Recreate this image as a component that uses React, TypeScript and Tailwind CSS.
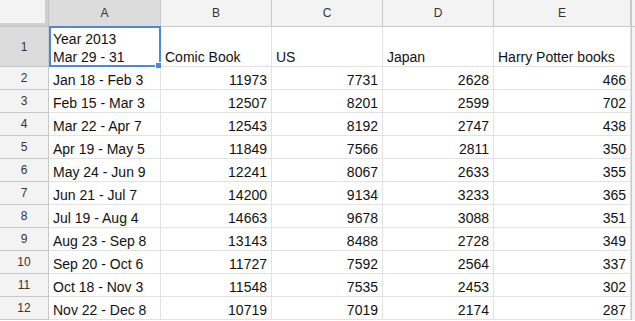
import React from "react";

const rows: [string, number, number, number, number][] = [
  ["Jan 18 - Feb 3", 11973, 7731, 2628, 466],
  ["Feb 15 - Mar 3", 12507, 8201, 2599, 702],
  ["Mar 22 - Apr 7", 12543, 8192, 2747, 438],
  ["Apr 19 - May 5", 11849, 7566, 2811, 350],
  ["May 24 - Jun 9", 12241, 8067, 2633, 355],
  ["Jun 21 - Jul 7", 14200, 9134, 3233, 365],
  ["Jul 19 - Aug 4", 14663, 9678, 3088, 351],
  ["Aug 23 - Sep 8", 13143, 8488, 2728, 349],
  ["Sep 20 - Oct 6", 11727, 7592, 2564, 337],
  ["Oct 18 - Nov 3", 11548, 7535, 2453, 302],
  ["Nov 22 - Dec 8", 10719, 7019, 2174, 287],
];

const cols = ["A", "B", "C", "D", "E"];

export default function App() {
  return (
    <div
      className="relative w-[635px] h-[321px] bg-white overflow-hidden text-[#111]"
      style={{ fontFamily: '"Liberation Sans", Arial, sans-serif' }}
    >
      <div className="grid grid-cols-[49px_112px_111px_111px_111px_137px_1fr] grid-rows-[27px_40px_repeat(11,23px)]">
        {/* corner */}
        <div className="border-r border-b border-[#c0c0c0] bg-[#f8f8f8]">
          <div className="h-full w-full bg-[#f3f3f3] border-r-[3px] border-b-[3px] border-[#cfcfcf]" />
        </div>
        {cols.map((c) => (
          <div
            key={c}
            className={`flex items-center justify-center border-r border-b border-[#c8c8c8] text-[12px] text-[#333] ${
              c === "A" ? "bg-[#dcdcdc]" : "bg-[#f3f3f3]"
            }`}
          >
            {c}
          </div>
        ))}
        <div className="bg-[#f3f3f3] border-b border-l border-[#c8c8c8]" />

        {/* row 1 */}
        <div className="flex items-center justify-center border-r border-b border-[#c8c8c8] bg-[#dcdcdc] text-[12px] text-[#333]">
          1
        </div>
        <div className="flex flex-col justify-end border-r border-b border-[#e2e2e2] px-[4px] text-[14px] leading-[18px]">
          <span>Year 2013</span>
          <span>Mar 29 - 31</span>
        </div>
        {["Comic Book", "US", "Japan", "Harry Potter books"].map((t) => (
          <div
            key={t}
            className="flex items-end border-r border-b border-[#e2e2e2] px-[4px] text-[14px] leading-[18px] whitespace-nowrap"
          >
            {t}
          </div>
        ))}
        <div className="bg-[#f3f3f3] border-l border-[#c8c8c8]" />

        {rows.map((r, i) => (
          <React.Fragment key={i}>
            <div className="flex items-center justify-center border-r border-b border-[#c8c8c8] bg-[#f3f3f3] text-[12px] text-[#333]">
              {i + 2}
            </div>
            <div className="flex items-end border-r border-b border-[#e2e2e2] px-[4px] text-[14px] leading-[18px] whitespace-nowrap">
              {r[0]}
            </div>
            {[r[1], r[2], r[3], r[4]].map((v, j) => (
              <div
                key={j}
                className="flex items-end justify-end border-r border-b border-[#e2e2e2] px-[4px] text-[14px] leading-[18px]"
              >
                {v}
              </div>
            ))}
            <div className="bg-[#f3f3f3] border-l border-[#c8c8c8]" />
          </React.Fragment>
        ))}
      </div>

      {/* selection */}
      <div className="absolute left-[49px] top-[26px] w-[112px] h-[41px] border-2 border-[#4a89dc] pointer-events-none" />
      <div className="absolute left-[155px] top-[62px] w-[7px] h-[7px] bg-[#4a89dc] border border-white" />
    </div>
  );
}
